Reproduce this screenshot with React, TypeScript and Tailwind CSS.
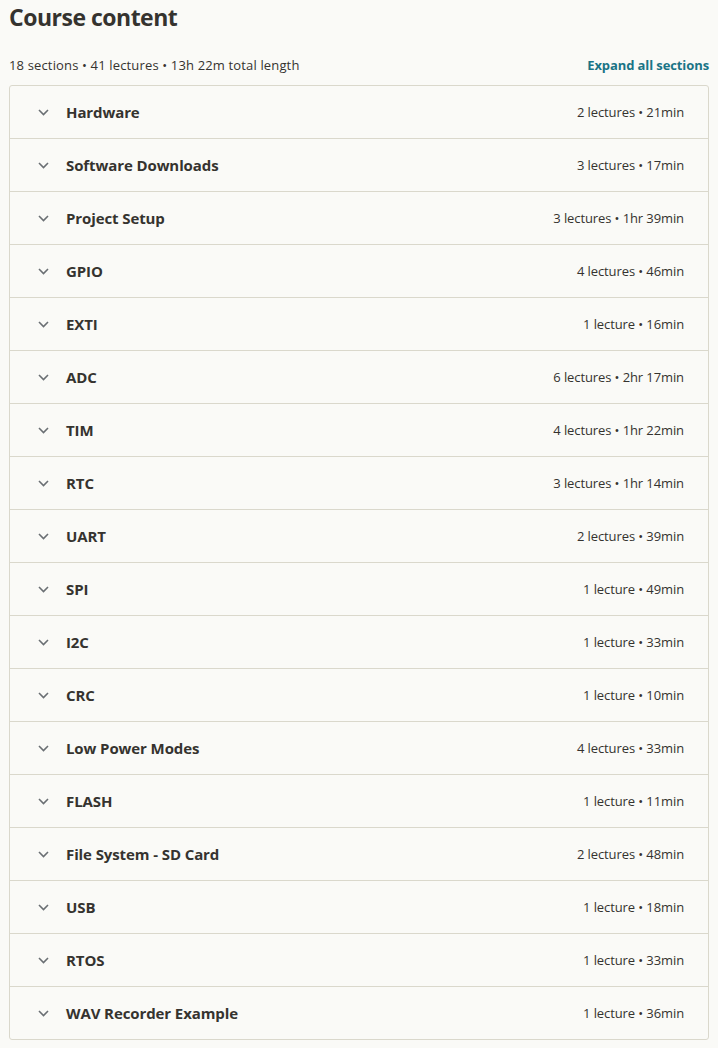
const sections: [string, string][] = [
  ["Hardware", "2 lectures • 21min"],
  ["Software Downloads", "3 lectures • 17min"],
  ["Project Setup", "3 lectures • 1hr 39min"],
  ["GPIO", "4 lectures • 46min"],
  ["EXTI", "1 lecture • 16min"],
  ["ADC", "6 lectures • 2hr 17min"],
  ["TIM", "4 lectures • 1hr 22min"],
  ["RTC", "3 lectures • 1hr 14min"],
  ["UART", "2 lectures • 39min"],
  ["SPI", "1 lecture • 49min"],
  ["I2C", "1 lecture • 33min"],
  ["CRC", "1 lecture • 10min"],
  ["Low Power Modes", "4 lectures • 33min"],
  ["FLASH", "1 lecture • 11min"],
  ["File System - SD Card", "2 lectures • 48min"],
  ["USB", "1 lecture • 18min"],
  ["RTOS", "1 lecture • 33min"],
  ["WAV Recorder Example", "1 lecture • 36min"],
]

const Chevron = () => (
  <svg width="11" height="7" viewBox="0 0 11 7" fill="none" className="shrink-0">
    <path d="M1 1l4.5 4.5L10 1" stroke="#6a6f73" strokeWidth="1.6" />
  </svg>
)

export default function App() {
  return (
    <div className="min-h-[1048px] bg-[#fafaf7] font-['Open_Sans',sans-serif] text-[#35332f]">
      <div className="w-[718px] pl-[9px] pr-[9px] pt-px">
        <h2 className="text-[23px] font-bold leading-8 tracking-[-0.5px]">Course content</h2>
        <div className="mt-[22px] flex items-center justify-between text-[13px] leading-5">
          <span className="tracking-[0.15px]">18 sections • 41 lectures • 13h 22m total length</span>
          <span className="font-bold text-[#1a7486] tracking-[-0.1px]">Expand all sections</span>
        </div>
        <div className="mt-[10px] rounded-[3px] border border-[#dad8cc]">
          {sections.map(([name, meta], i) => (
            <div
              key={name}
              className={
                "flex h-[52px] items-center pl-[28px] pr-6 " +
                (i < sections.length - 1 ? "box-content border-b border-[#dad8cc]" : "")
              }
            >
              <Chevron />
              <span className="ml-[17px] text-[15px] font-bold tracking-[-0.1px]">{name}</span>
              <span className="ml-auto pt-px text-[13px] tracking-[-0.1px]">{meta}</span>
            </div>
          ))}
        </div>
      </div>
    </div>
  )
}
